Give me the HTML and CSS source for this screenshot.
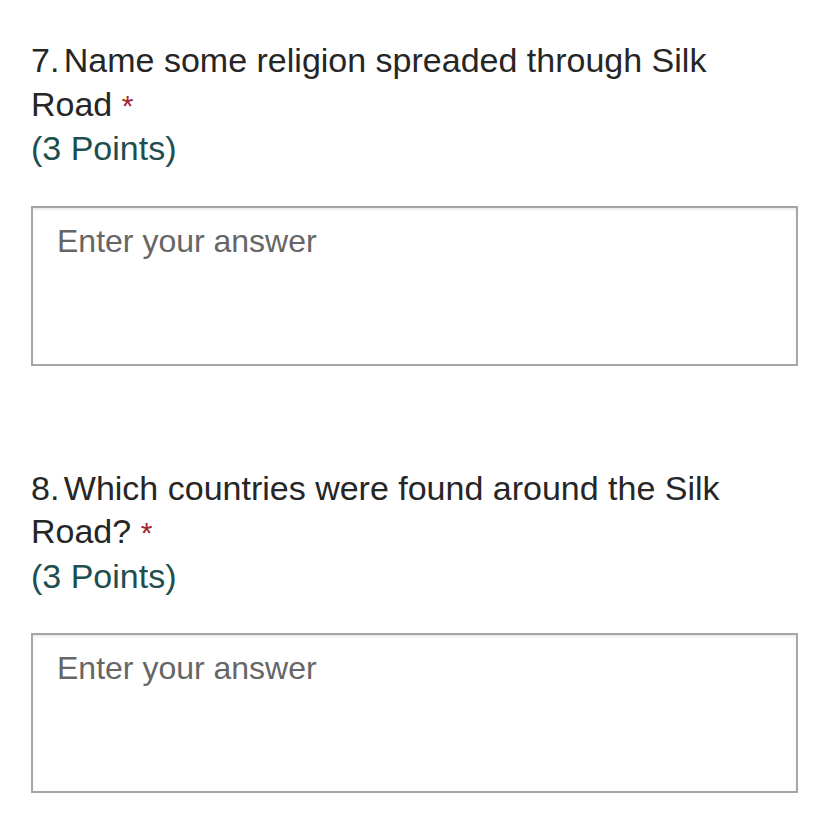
FILE: index.html
```html
<!DOCTYPE html>
<html>
<head>
<meta charset="utf-8">
<link rel="stylesheet" href="styles.css">
</head>
<body>
<div class="form">
  <div class="question">
    <div class="title"><span class="num">7. </span>Name some religion spreaded through Silk Road <span class="req">*</span></div>
    <div class="points">(3 Points)</div>
    <div class="answer"><span class="placeholder">Enter your answer</span></div>
  </div>
  <div class="question">
    <div class="title"><span class="num">8. </span>Which countries were found around the Silk Road? <span class="req">*</span></div>
    <div class="points">(3 Points)</div>
    <div class="answer"><span class="placeholder">Enter your answer</span></div>
  </div>
</div>
</body>
</html>
```

FILE: styles.css
```css
html, body {
  margin: 0;
  padding: 0;
  background: #ffffff;
}
body {
  font-family: "Liberation Sans", Arial, sans-serif;
}
.form {
  padding: 39px 30px 0 31px;
  display: flex;
  flex-direction: column;
  gap: 101px;
}
.question {
  display: flex;
  flex-direction: column;
}
.title {
  font-size: 34px;
  line-height: 43.5px;
  color: #262626;
  padding-right: 60px;
}
.num {
  word-spacing: -5px;
}
.req {
  color: #a4262c;
  font-size: 30px;
}
.points {
  font-size: 34px;
  line-height: 43.5px;
  color: #1e4e4e;
}
.answer {
  margin-top: 35px;
  height: 160px;
  border: 2px solid #a6a6a6;
  box-shadow: inset 0 2px 2px rgba(0,0,0,0.08);
  padding: 14px 24px;
  box-sizing: border-box;
}
.placeholder {
  font-size: 32px;
  line-height: 38px;
  color: #666666;
}
```
